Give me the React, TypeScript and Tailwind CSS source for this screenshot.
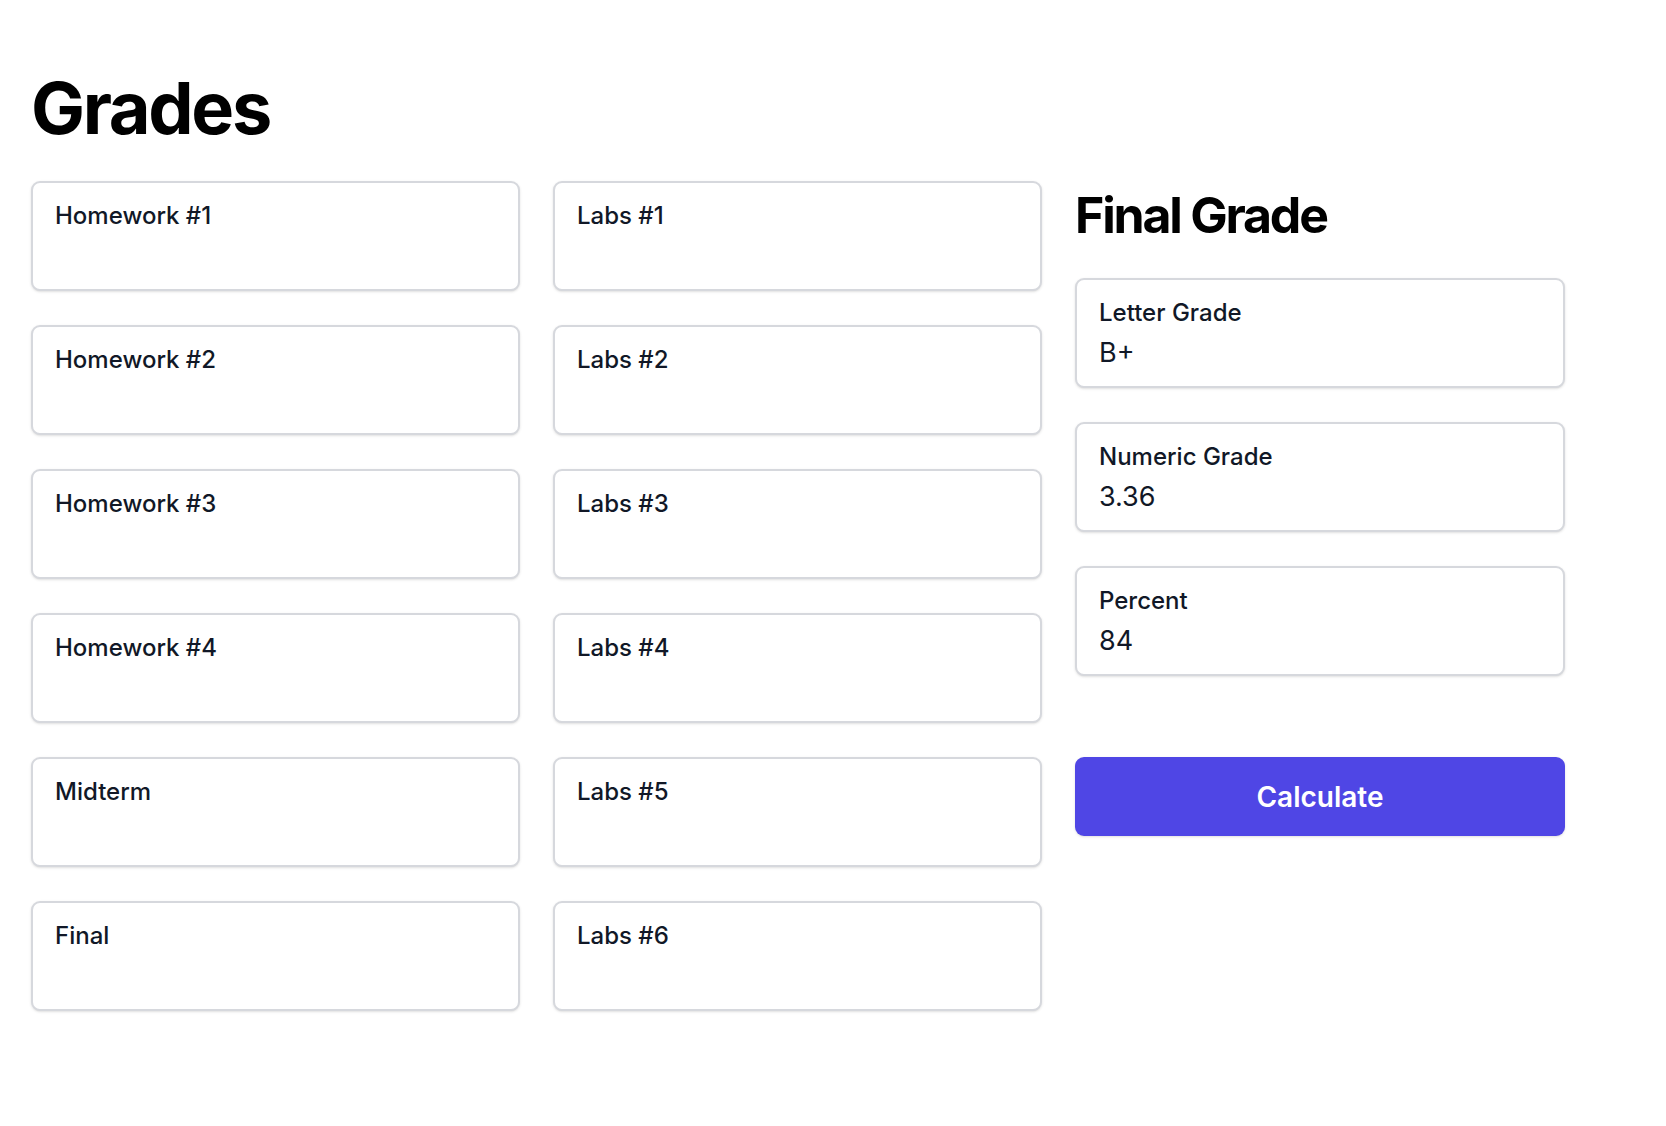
// App.tsx
const LEFT_FIELDS = ['Homework #1', 'Homework #2', 'Homework #3', 'Homework #4', 'Midterm', 'Final'];
const LAB_FIELDS = ['Labs #1', 'Labs #2', 'Labs #3', 'Labs #4', 'Labs #5', 'Labs #6'];

const RESULTS = [
    { label: 'Letter Grade', value: 'B+' },
    { label: 'Numeric Grade', value: '3.36' },
    { label: 'Percent', value: '84' },
];

interface FieldBoxProps {
    label: string;
    value?: string;
}

const FieldBox = ({ label, value }: FieldBoxProps) => {
    return (
        <div className="h-[110px] rounded-[9px] border-2 border-[#d6d8dd] bg-white px-[22px] pt-[15px] shadow-sm">
            <div className="text-[24px] font-medium leading-[36px] text-[#111827]">{label}</div>
            <div className="mt-[2px] text-[27px] leading-[39px] text-[#111827]">{value ?? ''}</div>
        </div>
    );
};

const App = () => {
    return (
        <div className="min-h-screen bg-white font-['Inter','Liberation_Sans',sans-serif] text-black">
            <div className="pl-[31px] pt-[72px]">
                <h1 className="text-[72px] font-bold leading-[72px] tracking-[-2.3px]">Grades</h1>

                <div className="mt-[37px] grid grid-cols-[489px_489px_490px] gap-x-[33px]">
                    <div className="flex flex-col gap-[34px]">
                        {LEFT_FIELDS.map(name => (
                            <FieldBox key={name} label={name} />
                        ))}
                    </div>

                    <div className="flex flex-col gap-[34px]">
                        {LAB_FIELDS.map(name => (
                            <FieldBox key={name} label={name} />
                        ))}
                    </div>

                    <div className="flex flex-col">
                        {/* heading sits a little lower than the first row of inputs */}
                        <h2 className="mt-[9px] mb-[38px] text-[50px] font-bold leading-[50px] tracking-[-2.2px]">
                            Final Grade
                        </h2>
                        <div className="flex flex-col gap-[34px]">
                            {RESULTS.map(r => (
                                <FieldBox key={r.label} label={r.label} value={r.value} />
                            ))}
                        </div>
                        <button
                            type="button"
                            className="mt-[81px] h-[79px] w-full rounded-[9px] bg-[#4f46e5] text-[28px] font-semibold text-white shadow-sm"
                        >
                            Calculate
                        </button>
                    </div>
                </div>
            </div>
        </div>
    );
};

export default App;
